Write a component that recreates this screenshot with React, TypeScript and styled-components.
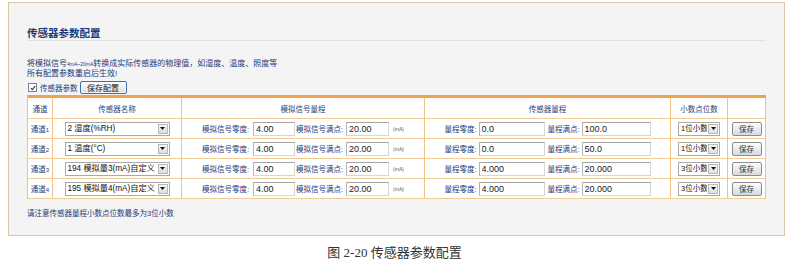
import React from 'react';
import styled, { createGlobalStyle } from 'styled-components';

const GlobalStyle = createGlobalStyle`
  html, body {
    margin: 0;
    padding: 0;
    background: #fff;
  }
  body {
    font-family: "Liberation Sans", "Noto Sans CJK SC", sans-serif;
  }
`;

const Page = styled.div`
  width: 789px;
  height: 264px;
  padding-top: 2px;
  box-sizing: border-box;
  overflow: hidden;
`;

const Panel = styled.div`
  margin-left: 8px;
  width: 777px;
  height: 234px;
  box-sizing: border-box;
  border: 1px solid #dac8a2;
  background: #f4f4f4;
  padding: 0 18px 0 18px;
`;

const Title = styled.h2`
  margin: 23px 0 0;
  padding-bottom: 1px;
  font-family: "Noto Sans CJK SC", sans-serif;
  font-size: 10.5px;
  line-height: 13px;
  font-weight: 700;
  color: #1d3a73;
  border-bottom: 1px solid #e0e0e0;
`;

const Desc = styled.div`
  margin-top: 18px;
  font-size: 8px;
  line-height: 9px;
  color: #1f3a78;
`;

const Tiny = styled.span`
  font-size: 5px;
`;

const CheckRow = styled.div`
  display: flex;
  align-items: center;
  height: 15px;
  margin-top: 2px;
  font-size: 7.5px;
  color: #1f3a78;
`;

const CheckBox = styled.span`
  display: inline-flex;
  align-items: center;
  justify-content: center;
  width: 7px;
  height: 7px;
  margin: 0 3px 0 1px;
  border: 1px solid #72829a;
  background: #fff;
`;

const SaveAllButton = styled.button`
  margin-left: 2px;
  width: 47px;
  height: 13px;
  padding: 0;
  border: 1px solid #3d6fa8;
  border-radius: 2px;
  background: linear-gradient(#ffffff, #dcdcdc);
  box-shadow: inset 0 0 0 1px #f8f8f8;
  font-family: "Noto Sans CJK SC", sans-serif;
  font-size: 8px;
  line-height: 11px;
  color: #222;
`;

const Table = styled.table`
  width: 739px;
  border-collapse: separate;
  border-spacing: 0;
  table-layout: fixed;
  background: #fff;
  border-top: 3px solid #f2a24c;
  border-left: 1px solid #f2c084;
`;

const Th = styled.th<{ $w: number }>`
  width: ${(p) => p.$w}px;
  height: 21px;
  box-sizing: border-box;
  padding: 0;
  border-right: 1px solid #f2c084;
  border-bottom: 1px solid #f4cc98;
  font-weight: 400;
  font-size: 7.5px;
  color: #2a4274;
  text-align: center;
  vertical-align: middle;
`;

const Td = styled.td`
  height: 20px;
  box-sizing: border-box;
  padding: 0;
  border-right: 1px solid #f2c084;
  border-bottom: 1px solid #f4cc98;
  font-size: 7.5px;
  color: #1f3a78;
  text-align: center;
  vertical-align: middle;
  white-space: nowrap;
`;

const Sub = styled.span`
  font-size: 6px;
`;

const FieldGroup = styled.div`
  display: flex;
  align-items: center;
  justify-content: center;
`;

const Label = styled.span<{ $w: number }>`
  display: inline-block;
  width: ${(p) => p.$w}px;
  text-align: left;
  font-size: 7.5px;
  color: #1f3a78;
`;

const Input = styled.input<{ $w: number; $gap?: number }>`
  width: ${(p) => p.$w}px;
  height: 14px;
  box-sizing: border-box;
  margin: 0 ${(p) => p.$gap ?? 0}px 0 0;
  padding: 0 2px;
  border: 1px solid #d6d6d6;
  border-top-color: #a4a4a4;
  border-left-color: #b4b4b4;
  background: #fff;
  font-family: "Liberation Sans", sans-serif;
  font-size: 9px;
  color: #222;
  outline: none;
`;

const Unit = styled.span`
  margin-left: 4px;
  font-size: 5px;
  color: #6a5a4a;
`;

const SelectBox = styled.div<{ $w: number }>`
  display: inline-flex;
  align-items: stretch;
  width: ${(p) => p.$w}px;
  height: 14px;
  box-sizing: border-box;
  border: 1px solid #a9a9a9;
  background: #fff;
  vertical-align: middle;
`;

const SelectText = styled.span<{ $size: number }>`
  flex: 1;
  min-width: 0;
  overflow: hidden;
  padding-left: 2px;
  font-size: ${(p) => p.$size}px;
  line-height: 12px;
  color: #111;
  text-align: left;
  white-space: nowrap;
`;

const Arrow = styled.span`
  display: flex;
  align-items: center;
  justify-content: center;
  flex: 0 0 10px;
  margin: 1px;
  box-sizing: border-box;
  border: 1px solid #b8b8b8;
  background: linear-gradient(#f6f6f6, #dedede);
`;

const RowButton = styled.button`
  width: 30px;
  height: 14px;
  padding: 0;
  border: 1px solid #8c8c8c;
  border-radius: 2px;
  background: linear-gradient(#fcfcfc, #dadada);
  font-family: "Noto Sans CJK SC", sans-serif;
  font-size: 7.5px;
  line-height: 12px;
  color: #333;
  vertical-align: middle;
`;

const Note = styled.div`
  margin-top: 10px;
  font-size: 7.5px;
  line-height: 9px;
  color: #1f3a78;
`;

const Caption = styled.div`
  margin-top: 9px;
  text-align: center;
  font-family: "Liberation Serif", "Noto Sans CJK SC", serif;
  font-size: 13px;
  line-height: 16px;
  color: #333;
`;

type Channel = {
  name: string;
  zero: string;
  full: string;
  rangeZero: string;
  rangeFull: string;
  decimals: string;
};

const channels: Channel[] = [
  { name: '2 湿度(%RH)', zero: '4.00', full: '20.00', rangeZero: '0.0', rangeFull: '100.0', decimals: '1位小数' },
  { name: '1 温度(°C)', zero: '4.00', full: '20.00', rangeZero: '0.0', rangeFull: '50.0', decimals: '1位小数' },
  { name: '194 模拟量3(mA)自定义', zero: '4.00', full: '20.00', rangeZero: '4.000', rangeFull: '20.000', decimals: '3位小数' },
  { name: '195 模拟量4(mA)自定义', zero: '4.00', full: '20.00', rangeZero: '4.000', rangeFull: '20.000', decimals: '3位小数' },
];

const DownArrow = () => (
  <svg width="5" height="3" viewBox="0 0 5 3">
    <path d="M0 0h5L2.5 3z" fill="#111" />
  </svg>
);

const FakeSelect = ({ width, size, value }: { width: number; size: number; value: string }) => (
  <SelectBox $w={width}>
    <SelectText $size={size}>{value}</SelectText>
    <Arrow>
      <DownArrow />
    </Arrow>
  </SelectBox>
);

const App = () => {
  return (
    <>
      <GlobalStyle />
      <Page>
        <Panel>
          <Title>传感器参数配置</Title>
          <Desc>
            将模拟信号<Tiny>4mA~20mA</Tiny>转换成实际传感器的物理值，如湿度、温度、照度等
            <br />
            所有配置参数重启后生效!
          </Desc>
          <CheckRow>
            <CheckBox>
              <svg width="6" height="6" viewBox="0 0 6 6">
                <path d="M0.8 3.1L2.3 4.6L5.2 1.2" fill="none" stroke="#2b3a55" strokeWidth="1.1" />
              </svg>
            </CheckBox>
            传感器参数
            <SaveAllButton>保存配置</SaveAllButton>
          </CheckRow>
          <Table>
            <thead>
              <tr>
                <Th $w={25}>通道</Th>
                <Th $w={129}>传感器名称</Th>
                <Th $w={243}>模拟信号量程</Th>
                <Th $w={246}>传感器量程</Th>
                <Th $w={57}>小数点位数</Th>
                <Th $w={38}></Th>
              </tr>
            </thead>
            <tbody>
              {channels.map((c, i) => (
                <tr key={i}>
                  <Td>
                    通道<Sub>{i + 1}</Sub>
                  </Td>
                  <Td>
                    <FakeSelect width={105} size={8.2} value={c.name} />
                  </Td>
                  <Td>
                    <FieldGroup>
                      <Label $w={51}>模拟信号零度:</Label>
                      <Input $w={42} $gap={1} defaultValue={c.zero} />
                      <Label $w={50}>模拟信号满点:</Label>
                      <Input $w={43} defaultValue={c.full} />
                      <Unit>(mA)</Unit>
                    </FieldGroup>
                  </Td>
                  <Td>
                    <FieldGroup>
                      <Label $w={34}>量程零度:</Label>
                      <Input $w={66} $gap={3} defaultValue={c.rangeZero} />
                      <Label $w={34}>量程满点:</Label>
                      <Input $w={69} defaultValue={c.rangeFull} />
                    </FieldGroup>
                  </Td>
                  <Td>
                    <FakeSelect width={42} size={7.5} value={c.decimals} />
                  </Td>
                  <Td>
                    <RowButton>保存</RowButton>
                  </Td>
                </tr>
              ))}
            </tbody>
          </Table>
          <Note>请注意传感器量程小数点位数最多为3位小数</Note>
        </Panel>
        <Caption>图 2-20 传感器参数配置</Caption>
      </Page>
    </>
  );
};

export default App;
